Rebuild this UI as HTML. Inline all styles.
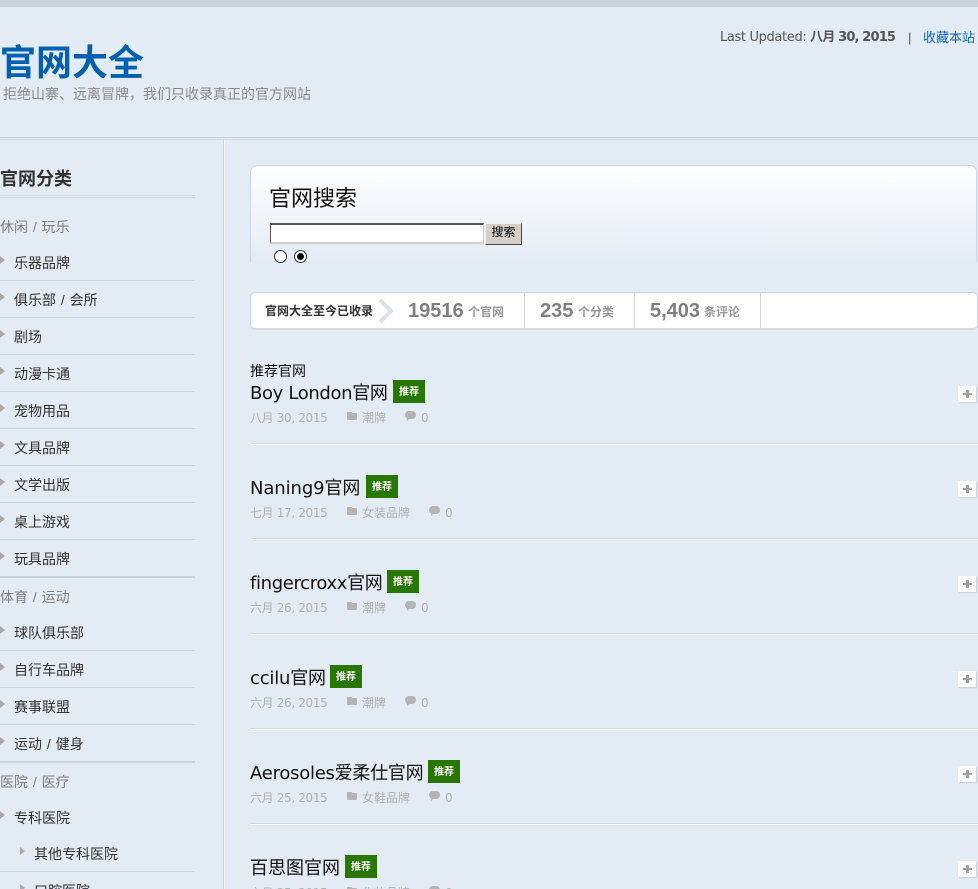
<!DOCTYPE html>
<html lang="zh">
<head>
<meta charset="utf-8">
<title>官网大全</title>
<style>
html,body{margin:0;padding:0;width:978px;height:889px;overflow:hidden;background:#e3ebf4;}
#w{position:absolute;left:0;top:0;width:978px;height:889px;overflow:hidden;background:#e3ebf4;font-family:"Liberation Sans","Noto Sans CJK SC",sans-serif;}
.a{position:absolute;white-space:nowrap;}
.t{position:absolute;white-space:nowrap;line-height:20px;height:20px;}
.s{font-size:14px;color:#333;left:14px;word-spacing:1px;margin-top:1px;}
.sub{font-size:14px;color:#333;left:34px;margin-top:1px;}
.h{font-size:14px;color:#808080;left:0;word-spacing:1px;}
.l{position:absolute;left:0;width:195px;height:1px;background:#cdd5df;}
.k{position:absolute;left:0;width:195px;height:2px;background:#cbd3dd;}
.r{position:absolute;left:0;width:0;height:0;border-left:5px solid #a8a8a8;border-top:4px solid transparent;border-bottom:4px solid transparent;}
.ti{font-size:18px;color:#111;left:250px;font-family:"DejaVu Sans","Noto Sans CJK SC",sans-serif;line-height:24px;height:24px;}
.b{position:absolute;width:32px;height:23px;background:#287800;color:#fff;font-size:10px;line-height:26px;text-align:center;font-weight:bold;}
.m{font-size:12px;color:#b0b0b0;font-family:"DejaVu Sans","Noto Sans CJK SC",sans-serif;}
.da{letter-spacing:-.35px;}
.sep{position:absolute;left:250px;width:728px;height:1px;background:#d4d9df;box-shadow:0 1px 0 #fff;}
.p{position:absolute;left:958px;width:18px;height:16px;background:#fff;box-shadow:1px 1px 1px #c8ced6;}
.p:before{content:"";position:absolute;left:5px;top:7px;width:9px;height:2px;background:#a0a0a0;}
.p:after{content:"";position:absolute;left:8px;top:4px;width:3px;height:8px;background:#a0a0a0;}
.fo{position:absolute;width:10px;height:7px;background:#b4b4b4;border-radius:1px;}
.fo:before{content:"";position:absolute;left:0;top:-1px;width:5px;height:2px;background:#b4b4b4;}
.bu{position:absolute;width:11px;height:8px;background:#b4b4b4;border-radius:5px;}
.bu:after{content:"";position:absolute;left:2px;top:7px;width:0;height:0;border-top:3px solid #b4b4b4;border-right:3px solid transparent;}
.num{font-size:20px;font-weight:bold;color:#808080;}
.un{font-size:12px;font-weight:bold;color:#999;}
.d{position:absolute;top:293px;width:1px;height:35px;background:#d3d7dc;}
</style>
</head>
<body>
<div id="w">
<div class="a" style="left:0;top:0;width:978px;height:7px;background:#cad2dc;"></div>

<div class="t" style="left:0;top:40px;font-size:36px;font-weight:bold;color:#0060b0;line-height:46px;height:46px;">官网大全</div>
<div class="t" style="left:3px;top:84px;font-size:14px;color:#8a8a8a;">拒绝山寨、远离冒牌，我们只收录真正的官方网站</div>

<div class="t" style="left:720px;top:28px;font-size:13px;color:#555;font-family:'DejaVu Sans','Noto Sans CJK SC',sans-serif;letter-spacing:-.35px;">Last Updated: <b style="letter-spacing:-.85px;">八月 30, 2015</b></div>
<div class="t" style="left:908px;top:28px;font-size:13px;color:#555;">|</div>
<div class="t" style="left:923px;top:28px;font-size:13px;color:#0a68b8;">收藏本站</div>

<div class="a" style="left:0;top:137px;width:978px;height:1px;background:#c9d1dc;"></div>
<div class="a" style="left:0;top:139px;width:978px;height:1px;background:#d0d8e2;"></div>
<div class="a" style="left:223px;top:140px;width:1px;height:749px;background:#cdd5df;"></div>
<div class="a" style="left:224px;top:140px;width:1px;height:749px;background:#f4f7fa;"></div>

<div class="t" style="left:0;top:169px;font-size:18px;font-weight:bold;color:#333;">官网分类</div>
<div class="l" style="top:195px;"></div><div class="l" style="top:197px;"></div>

<div class="t h" style="top:217px;">休闲 / 玩乐</div>
<div class="r" style="top:256px;"></div><div class="t s" style="top:252px;">乐器品牌</div><div class="l" style="top:280px;"></div>
<div class="r" style="top:293px;"></div><div class="t s" style="top:289px;">俱乐部 / 会所</div><div class="l" style="top:317px;"></div>
<div class="r" style="top:330px;"></div><div class="t s" style="top:326px;">剧场</div><div class="l" style="top:354px;"></div>
<div class="r" style="top:367px;"></div><div class="t s" style="top:363px;">动漫卡通</div><div class="l" style="top:391px;"></div>
<div class="r" style="top:404px;"></div><div class="t s" style="top:400px;">宠物用品</div><div class="l" style="top:428px;"></div>
<div class="r" style="top:441px;"></div><div class="t s" style="top:437px;">文具品牌</div><div class="l" style="top:465px;"></div>
<div class="r" style="top:478px;"></div><div class="t s" style="top:474px;">文学出版</div><div class="l" style="top:502px;"></div>
<div class="r" style="top:515px;"></div><div class="t s" style="top:511px;">桌上游戏</div><div class="l" style="top:539px;"></div>
<div class="r" style="top:552px;"></div><div class="t s" style="top:548px;">玩具品牌</div><div class="k" style="top:576px;"></div>

<div class="t h" style="top:587px;">体育 / 运动</div>
<div class="r" style="top:626px;"></div><div class="t s" style="top:622px;">球队俱乐部</div><div class="l" style="top:650px;"></div>
<div class="r" style="top:663px;"></div><div class="t s" style="top:659px;">自行车品牌</div><div class="l" style="top:687px;"></div>
<div class="r" style="top:700px;"></div><div class="t s" style="top:696px;">赛事联盟</div><div class="l" style="top:724px;"></div>
<div class="r" style="top:737px;"></div><div class="t s" style="top:733px;">运动 / 健身</div><div class="k" style="top:761px;"></div>

<div class="t h" style="top:772px;">医院 / 医疗</div>
<div class="r" style="top:811px;"></div><div class="t s" style="top:807px;">专科医院</div>
<div class="r" style="left:20px;top:847px;"></div><div class="t sub" style="top:843px;">其他专科医院</div><div class="l" style="top:871px;"></div>
<div class="r" style="left:20px;top:884px;"></div><div class="t sub" style="top:880px;">口腔医院</div>

<div class="a" style="left:250px;top:165px;width:725px;height:96px;border:1px solid #c9d7e6;border-bottom:0;border-radius:7px 7px 0 0;background:linear-gradient(#ffffff 0,#f6f9fc 30%,#e3ebf4 100%);"></div>
<div class="t" style="left:269px;top:184px;font-size:22px;color:#111;line-height:30px;height:30px;">官网搜索</div>
<div class="a" style="left:270px;top:223px;width:212px;height:17px;background:#fff;border:1px solid;border-color:#555 #d4d0c8 #d4d0c8 #555;border-width:2px 1px 2px 1px;"></div>
<div class="a" style="left:485px;top:223px;width:35px;height:20px;background:#d4d0c8;border:1px solid;border-color:#f4f2ee #444 #444 #f4f2ee;font-size:12px;line-height:17px;text-align:center;color:#000;">搜索</div>
<div class="a" style="left:274px;top:250px;width:11px;height:11px;border:1px solid #333;border-radius:50%;background:#fff;"></div>
<div class="a" style="left:294px;top:250px;width:11px;height:11px;border:1px solid #333;border-radius:50%;background:#fff;"></div>
<div class="a" style="left:297px;top:253px;width:7px;height:7px;border-radius:50%;background:#000;"></div>

<div class="a" style="left:250px;top:292px;width:726px;height:35px;border:1px solid #c9d7e6;border-bottom:2px solid #d2dae4;border-radius:5px;background:#fff;"></div>
<div class="t" style="left:265px;top:301px;font-size:12px;font-weight:bold;color:#333;">官网大全至今已收录</div>
<svg class="a" style="left:378px;top:299px;" width="17" height="24"><path d="M2 1 L13 12 L2 23" fill="none" stroke="#dfe1e4" stroke-width="4"/></svg>
<div class="t num" style="left:408px;top:301px;">19516</div><div class="t un" style="left:468px;top:302px;">个官网</div>
<div class="d" style="left:524px;"></div>
<div class="t num" style="left:540px;top:301px;">235</div><div class="t un" style="left:578px;top:302px;">个分类</div>
<div class="d" style="left:634px;"></div>
<div class="t num" style="left:650px;top:301px;">5,403</div><div class="t un" style="left:704px;top:302px;">条评论</div>
<div class="d" style="left:760px;"></div>

<div class="t" style="left:250px;top:361px;font-size:14px;color:#111;">推荐官网</div>

<div class="t ti" style="top:382px;letter-spacing:-.35px;">Boy London官网</div>
<div class="b" style="left:393px;top:380px;">推荐</div>
<div class="t m da" style="left:250px;top:408px;">八月 30, 2015</div>
<div class="fo" style="left:347px;top:413px;"></div><div class="t m" style="left:362px;top:408px;">潮牌</div>
<div class="bu" style="left:405px;top:411px;"></div><div class="t m" style="left:421px;top:408px;">0</div>
<div class="p" style="top:386px;"></div>
<div class="sep" style="top:443px;"></div>

<div class="t ti" style="top:477px;letter-spacing:-.1px;">Naning9官网</div>
<div class="b" style="left:366px;top:475px;">推荐</div>
<div class="t m da" style="left:250px;top:503px;">七月 17, 2015</div>
<div class="fo" style="left:347px;top:508px;"></div><div class="t m" style="left:362px;top:503px;">女装品牌</div>
<div class="bu" style="left:429px;top:506px;"></div><div class="t m" style="left:445px;top:503px;">0</div>
<div class="p" style="top:481px;"></div>
<div class="sep" style="top:538px;"></div>

<div class="t ti" style="top:572px;letter-spacing:-.35px;">fingercroxx官网</div>
<div class="b" style="left:387px;top:570px;">推荐</div>
<div class="t m da" style="left:250px;top:598px;">六月 26, 2015</div>
<div class="fo" style="left:347px;top:603px;"></div><div class="t m" style="left:362px;top:598px;">潮牌</div>
<div class="bu" style="left:405px;top:601px;"></div><div class="t m" style="left:421px;top:598px;">0</div>
<div class="p" style="top:576px;"></div>
<div class="sep" style="top:633px;"></div>

<div class="t ti" style="top:667px;letter-spacing:-.2px;">ccilu官网</div>
<div class="b" style="left:330px;top:665px;">推荐</div>
<div class="t m da" style="left:250px;top:693px;">六月 26, 2015</div>
<div class="fo" style="left:347px;top:698px;"></div><div class="t m" style="left:362px;top:693px;">潮牌</div>
<div class="bu" style="left:405px;top:696px;"></div><div class="t m" style="left:421px;top:693px;">0</div>
<div class="p" style="top:671px;"></div>
<div class="sep" style="top:728px;"></div>

<div class="t ti" style="top:762px;letter-spacing:-.25px;">Aerosoles爱柔仕官网</div>
<div class="b" style="left:428px;top:760px;">推荐</div>
<div class="t m da" style="left:250px;top:788px;">六月 25, 2015</div>
<div class="fo" style="left:347px;top:793px;"></div><div class="t m" style="left:362px;top:788px;">女鞋品牌</div>
<div class="bu" style="left:429px;top:791px;"></div><div class="t m" style="left:445px;top:788px;">0</div>
<div class="p" style="top:766px;"></div>
<div class="sep" style="top:823px;"></div>

<div class="t ti" style="top:857px;">百思图官网</div>
<div class="b" style="left:345px;top:855px;">推荐</div>
<div class="t m da" style="left:250px;top:883px;">六月 25, 2015</div>
<div class="fo" style="left:347px;top:888px;"></div><div class="t m" style="left:362px;top:883px;">化妆品牌</div>
<div class="bu" style="left:429px;top:886px;"></div><div class="t m" style="left:445px;top:883px;">0</div>
<div class="p" style="top:861px;"></div>
</div>
</body>
</html>
